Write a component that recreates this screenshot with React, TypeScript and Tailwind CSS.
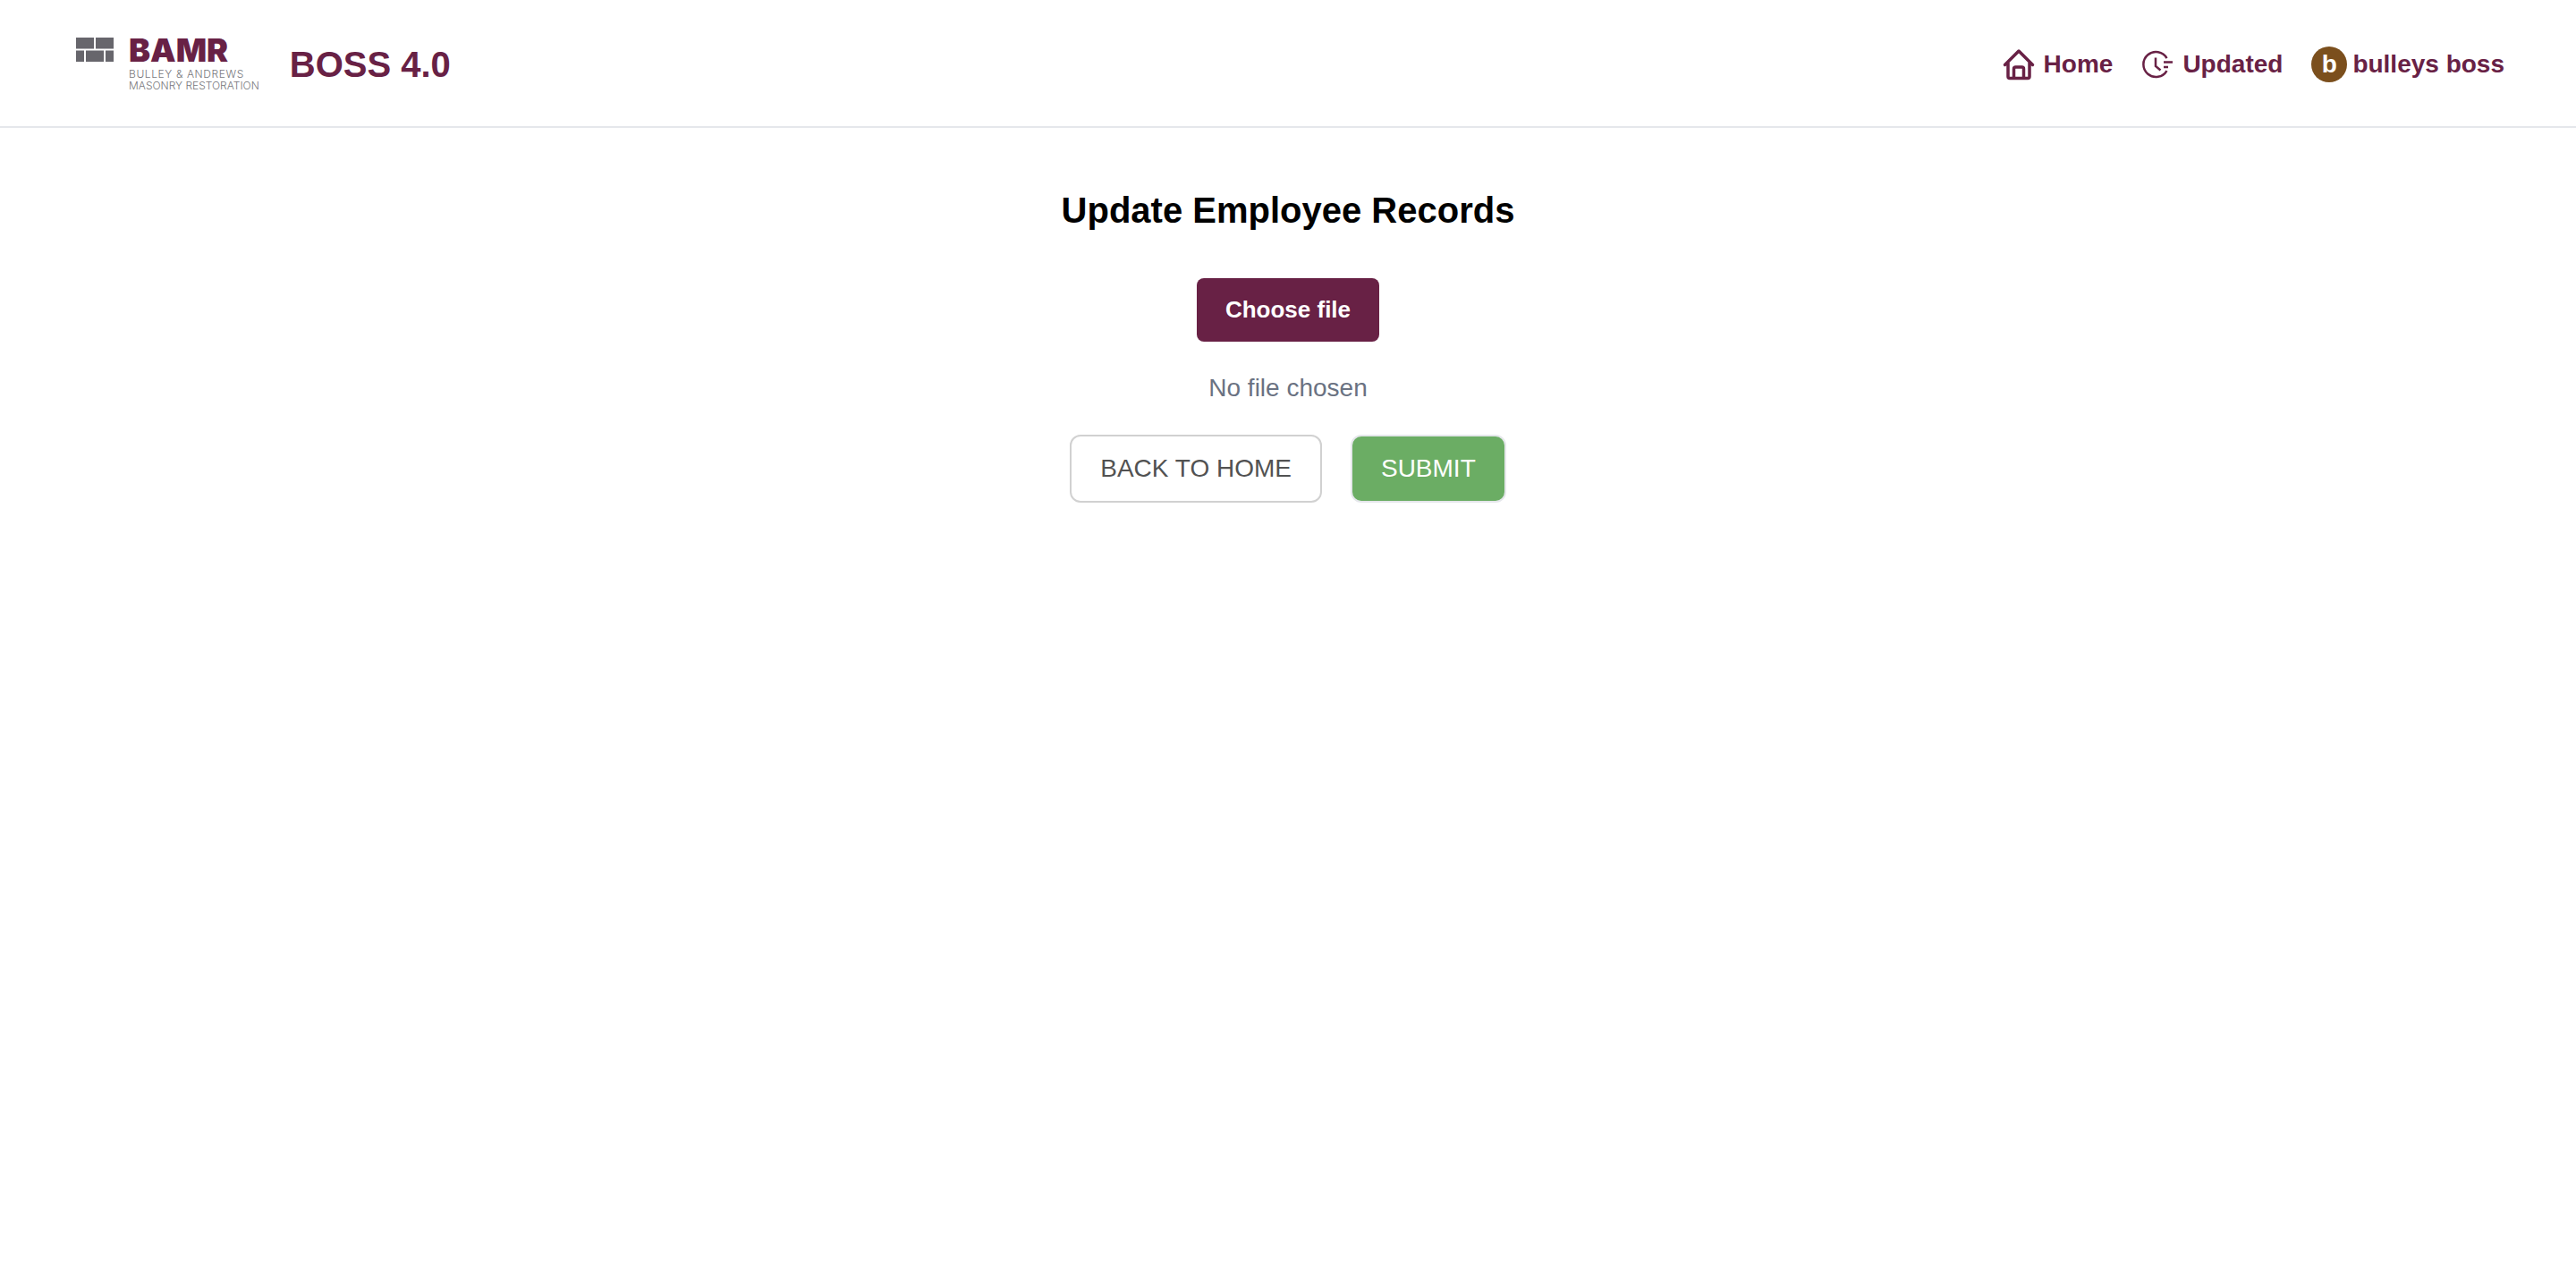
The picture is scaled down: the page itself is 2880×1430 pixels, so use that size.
import React, { useState } from "react";

function Logo() {
  return (
    <span className="flex items-start gap-[17px] pt-[6px] pl-[5px]">
      <svg width="42" height="27" viewBox="0 0 42 27" fill="#67666c" aria-hidden="true">
        <path d="M0 0h20v12.500H0zM22 0h20v12.500H22zM0 14.500h9V27H0zM11 14.500h20V27H11zM33 14.500h9V27h-9z" />
      </svg>
      <span className="flex flex-col font-[Inter,sans-serif] text-[12px] leading-[13px] font-light text-[#77777c]">
        <span className="text-[36px] leading-7 font-black text-[#682145]">BAMR</span>
        <span className="mt-1.5 tracking-wider">BULLEY &amp; ANDREWS</span>
        <span>MASONRY RESTORATION</span>
      </span>
    </span>
  );
}

function HomeIcon() {
  return (
    <svg width="36" height="36" viewBox="0 0 36 36" fill="none" stroke="#682145" strokeWidth="3.500" strokeLinecap="round" strokeLinejoin="round" aria-hidden="true">
      <path d="M2.500 18.500 18 3l15.500 15.500M6 16v15.500a2 2 0 0 0 2 2h20a2 2 0 0 0 2-2V16M12.500 33V23a2 2 0 0 1 2-2h7a2 2 0 0 1 2 2v10" />
    </svg>
  );
}

function UpdatedIcon() {
  return (
    <svg width="36" height="36" viewBox="0 0 36 36" fill="none" stroke="#682145" strokeWidth="2.500" aria-hidden="true">
      <path d="M28.500 11A14 14 0 1 0 28.500 25M16 10.500v9.500l5.500 4.500M25 15.500h10M25 21h5" />
    </svg>
  );
}

export default function App() {
  const [fileName, setFileName] = useState("No file chosen");
  return (
    <div className="bg-white font-['Liberation_Sans',Arial,sans-serif] text-[28px] leading-10">
      <header className="flex items-start justify-between border-b-2 border-[#e5e7eb] px-20 pb-[39px] pt-9">
        <div className="flex items-start gap-[34px]">
          <a href="#home"><Logo /></a>
          <span className="pt-3 text-[40px] leading-[48px] font-bold text-[#682145]">BOSS 4.0</span>
        </div>
        <nav className="flex items-center gap-8 pt-4 font-bold text-[#682145]">
          <a href="#home" className="flex items-center gap-2.5"><HomeIcon />Home</a>
          <a href="#updated" className="flex items-center gap-2.5"><UpdatedIcon />Updated</a>
          <button type="button" className="flex items-center gap-1.5">
            <span className="flex size-10 items-center justify-center rounded-full bg-[#7b4f1d] text-white">b</span>
            bulleys boss
          </button>
        </nav>
      </header>
      <main className="flex flex-col items-center pt-16">
        <h1 className="text-[40px] leading-[56px] font-bold text-black">Update Employee Records</h1>
        <label htmlFor="employee-file" className="mt-12 flex cursor-pointer rounded-lg bg-[#682145] px-8 py-4 text-[26px] leading-[39px] font-bold text-white">
          Choose file
        </label>
        <input id="employee-file" type="file" className="sr-only" onChange={(e) => setFileName(e.target.files?.[0]?.name ?? "No file chosen")} />
        <p className="mt-8 text-gray-500">{fileName}</p>
        <div className="mt-8 flex gap-8">
          <button type="button" className="rounded-xl border-2 border-[#d1d1d1] bg-white px-8 py-4 text-[#525252]">BACK TO HOME</button>
          <button type="submit" className="rounded-xl border-2 border-gray-200 bg-[#6bad64] px-8 py-4 text-white">SUBMIT</button>
        </div>
      </main>
    </div>
  );
}
